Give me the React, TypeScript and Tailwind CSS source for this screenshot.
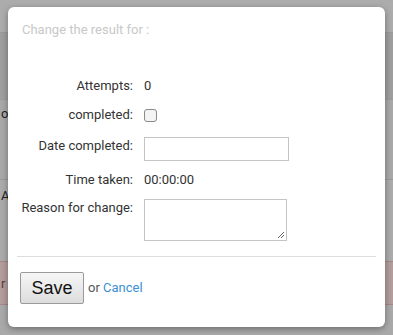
const Row = ({ label, children, className, labelClass }: { label: string; children: React.ReactNode; className?: string; labelClass?: string }) => (
  <div className={`flex items-center gap-[11px] ${className ?? ''}`}>
    <div className={`w-[116px] shrink-0 text-right leading-[20px] ${labelClass ?? ''}`}>{label}</div>
    <div className="leading-[20px]">{children}</div>
  </div>
)

export default function App() {
  return (
    <div className="relative h-[335px] w-[393px] overflow-hidden bg-[#a9a9a9] font-['Roboto',sans-serif] text-[13px] text-[#333]">
      {/* page behind the overlay */}
      <div className="flex h-full flex-col">
        <div className="h-[33px] border-b border-[#999] bg-[#acacac]" />
        <div className="h-[67px] border-b border-[#9a9a9a] bg-[#9e9e9e]" />
        <div className="h-[80px] border-b border-[#999] bg-[#a8a8a8] pl-[1px] pt-[4px] text-[#222]">o</div>
        <div className="h-[81px] bg-[#ababab] pl-[1px] pt-[6px] text-[#222]">A</div>
        <div className="h-[44px] border-y border-[#a98585] bg-[#b29c9c] pl-[1px] pt-[12px] text-[#5a3a3a]">r</div>
        <div className="flex-1 bg-[#a9a9a9]" />
      </div>

      {/* modal */}
      <div className="absolute left-[8px] top-[7px] flex h-[320px] w-[377px] flex-col rounded-[6px] bg-white px-[9px] shadow-[0_2px_6px_rgba(0,0,0,0.35)]">
        <div className="pl-[5px] pt-[13px] leading-[20px] text-[#c8c8c8]">Change the result for :</div>

        <div className="mt-[36px] flex flex-col">
          <Row label="Attempts:" className="h-[20px]">0</Row>
          <Row label="completed:" className="mt-[9px] h-[20px]">
            <div className="h-[13px] w-[13px] rounded-[3px] border border-[#8a8a8a] bg-[#f4f4f4]" />
          </Row>
          <Row label="Date completed:" labelClass="-mt-[7px]" className="mt-[12px] h-[24px]">
            <div className="h-[24px] w-[145px] border border-[#c4c4c4] bg-white" />
          </Row>
          <Row label="Time taken:" className="mt-[9px] h-[20px]">00:00:00</Row>
          <Row label="Reason for change:" labelClass="-mt-[1px] self-start" className="mt-[9px]">
            <div className="relative h-[42px] w-[143px] border border-[#c4c4c4] bg-white">
              <svg className="absolute bottom-[1px] right-[1px]" width="8" height="8" viewBox="0 0 8 8">
                <path d="M7 1 L1 7 M7 4 L4 7" stroke="#666" strokeWidth="1" />
              </svg>
            </div>
          </Row>
        </div>

        <div className="mt-[15px] border-t border-[#ddd]" />

        <div className="mt-[15px] flex items-center gap-[4px] pl-[3px]">
          <button className="h-[32px] w-[64px] rounded-[2px] border border-[#9a9a9a] bg-gradient-to-b from-[#f6f6f6] to-[#dddddd] font-['Liberation_Sans',Arial,sans-serif] text-[18px] text-[#111]">
            Save
          </button>
          <span className="text-[#555]">
            or <span className="text-[#3b8fd6]">Cancel</span>
          </span>
        </div>
      </div>
    </div>
  )
}
